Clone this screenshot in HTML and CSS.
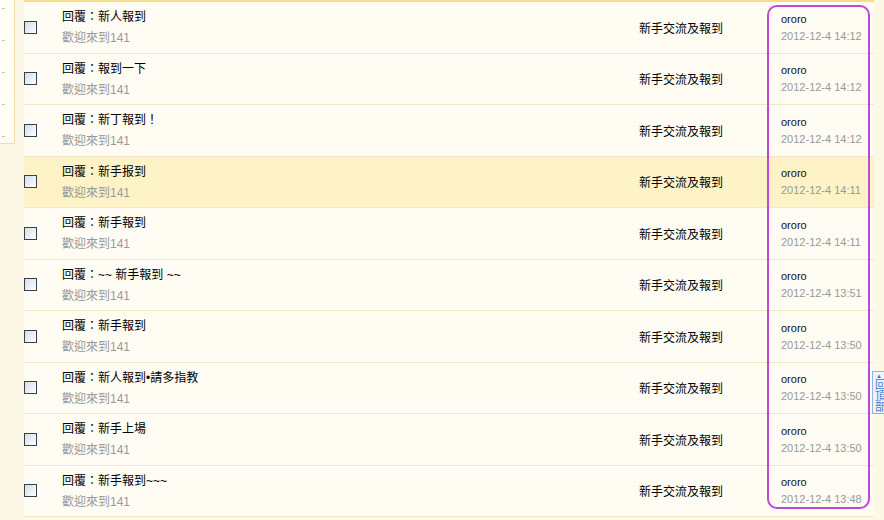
FILE: index.html
```html
<!DOCTYPE html>
<html lang="zh-Hant">
<head>
<meta charset="utf-8">
<title>帖子列表</title>
<link rel="stylesheet" href="styles.css">
</head>
<body>
<div class="page">
  <aside class="side"><i></i><i></i><i></i><i></i><i></i></aside>
  <div class="list">
    <div class="row"><span class="cb"></span><div class="subj"><div class="t">回覆：新人報到</div><div class="s">歡迎來到141</div></div><div class="cat">新手交流及報到</div><div class="by"><div class="u">ororo</div><div class="d">2012-12-4 14:12</div></div></div>
    <div class="row"><span class="cb"></span><div class="subj"><div class="t">回覆：報到一下</div><div class="s">歡迎來到141</div></div><div class="cat">新手交流及報到</div><div class="by"><div class="u">ororo</div><div class="d">2012-12-4 14:12</div></div></div>
    <div class="row"><span class="cb"></span><div class="subj"><div class="t">回覆：新丁報到！</div><div class="s">歡迎來到141</div></div><div class="cat">新手交流及報到</div><div class="by"><div class="u">ororo</div><div class="d">2012-12-4 14:12</div></div></div>
    <div class="row hl"><span class="cb"></span><div class="subj"><div class="t">回覆：新手报到</div><div class="s">歡迎來到141</div></div><div class="cat">新手交流及報到</div><div class="by"><div class="u">ororo</div><div class="d">2012-12-4 14:11</div></div></div>
    <div class="row"><span class="cb"></span><div class="subj"><div class="t">回覆：新手報到</div><div class="s">歡迎來到141</div></div><div class="cat">新手交流及報到</div><div class="by"><div class="u">ororo</div><div class="d">2012-12-4 14:11</div></div></div>
    <div class="row"><span class="cb"></span><div class="subj"><div class="t">回覆：~~ 新手報到 ~~</div><div class="s">歡迎來到141</div></div><div class="cat">新手交流及報到</div><div class="by"><div class="u">ororo</div><div class="d">2012-12-4 13:51</div></div></div>
    <div class="row"><span class="cb"></span><div class="subj"><div class="t">回覆：新手報到</div><div class="s">歡迎來到141</div></div><div class="cat">新手交流及報到</div><div class="by"><div class="u">ororo</div><div class="d">2012-12-4 13:50</div></div></div>
    <div class="row"><span class="cb"></span><div class="subj"><div class="t">回覆：新人報到•請多指教</div><div class="s">歡迎來到141</div></div><div class="cat">新手交流及報到</div><div class="by"><div class="u">ororo</div><div class="d">2012-12-4 13:50</div></div></div>
    <div class="row"><span class="cb"></span><div class="subj"><div class="t">回覆：新手上場</div><div class="s">歡迎來到141</div></div><div class="cat">新手交流及報到</div><div class="by"><div class="u">ororo</div><div class="d">2012-12-4 13:50</div></div></div>
    <div class="row"><span class="cb"></span><div class="subj"><div class="t">回覆：新手報到~~~</div><div class="s">歡迎來到141</div></div><div class="cat">新手交流及報到</div><div class="by"><div class="u">ororo</div><div class="d">2012-12-4 13:48</div></div></div>
  </div>
</div>
<div class="mark"></div>
<a class="totop" href="#"><span class="arr">▲</span>回<br>頂<br>部</a>
</body>
</html>
```
FILE: styles.css
```css
html, body {
  margin: 0;
  padding: 0;
  background: #fdf7e6;
  font-family: "Liberation Sans", "Noto Sans CJK TC", sans-serif;
  font-size: 12px;
  color: #000;
  overflow: hidden;
}

.page {
  display: flex;
  align-items: flex-start;
  width: 884px;
}

.side {
  width: 15px;
  height: 144px;
  flex: none;
  background: #fffdf6;
  border-right: 1px solid #efdcaa;
  border-bottom: 1px solid #efdcaa;
  display: flex;
  flex-direction: column;
  gap: 31px;
  padding-top: 8px;
  box-sizing: border-box;
}

.side i {
  display: block;
  width: 3px;
  height: 1px;
  margin-left: 2px;
  background: #c9c2ac;
}

.list {
  margin-left: 9px;
  width: 850px;
  border-top: 2px solid #f7dc8e;
  background: #fffcf3;
}

.row {
  display: grid;
  grid-template-columns: 37px 577px 143px 1fr;
  align-items: center;
  height: 51.5px;
  box-sizing: border-box;
  border-bottom: 1px solid #f1e7c4;
}

.row.hl {
  background: #fdf3c6;
}

.cb {
  width: 13px;
  height: 13px;
  box-sizing: border-box;
  border: 1px solid #34414f;
  background: linear-gradient(135deg, #d7dee6 0%, #eef1f4 60%, #ffffff 100%);
}

.subj {
  line-height: 20px;
  padding-left: 1px;
  padding-top: 1px;
}

.t {
  color: #000;
}

.s {
  color: #999;
  margin-top: 1px;
}

.cat {
  padding-left: 1px;
}

.by {
  font-size: 11px;
  line-height: 16px;
}

.u {
  color: #111;
}

.d {
  color: #999;
  margin-top: 1px;
}

.mark {
  position: absolute;
  left: 767px;
  top: 5px;
  width: 103px;
  height: 504px;
  box-sizing: border-box;
  border: 2px solid #bf48d2;
  border-radius: 10px;
}

.totop {
  position: fixed;
  left: 872px;
  top: 371px;
  width: 16px;
  height: 43px;
  box-sizing: border-box;
  border: 1px solid #93b4dc;
  background: #edf4fc;
  color: #3f79c6;
  font-size: 11px;
  line-height: 11px;
  text-decoration: none;
  padding-left: 2px;
  padding-top: 1px;
}

.totop .arr {
  display: block;
  font-size: 6px;
  line-height: 7px;
  padding-left: 1px;
}
```
